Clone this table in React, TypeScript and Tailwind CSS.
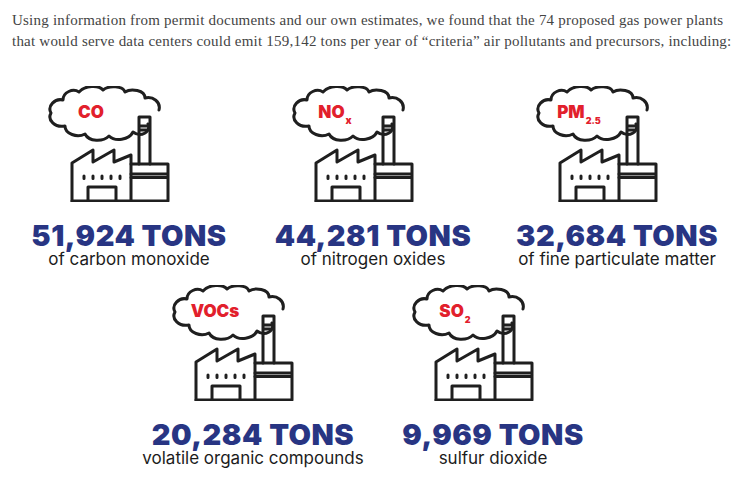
import type { ReactNode } from "react";

type Stat = {
  label: ReactNode;
  amount: string;
  caption: string;
};

const topRow: Stat[] = [
  { label: <>CO</>, amount: "51,924 TONS", caption: "of carbon monoxide" },
  {
    label: (
      <>
        NO<sub className="bottom-[-6px] ml-[1px] text-[10px]">x</sub>
      </>
    ),
    amount: "44,281 TONS",
    caption: "of nitrogen oxides",
  },
  {
    label: (
      <>
        PM<sub className="bottom-[-6px] ml-[1px] text-[9px]">2.5</sub>
      </>
    ),
    amount: "32,684 TONS",
    caption: "of fine particulate matter",
  },
];

const bottomRow: Stat[] = [
  { label: <>VOCs</>, amount: "20,284 TONS", caption: "volatile organic compounds" },
  {
    label: (
      <>
        SO<sub className="bottom-[-6px] ml-[1px] text-[9px]">2</sub>
      </>
    ),
    amount: "9,969 TONS",
    caption: "sulfur dioxide",
  },
];

function FactoryIcon() {
  return (
    <svg
      viewBox="0 0 124 116"
      className="h-[116px] w-[124px]"
      fill="none"
      stroke="#1f1f1f"
      strokeWidth="3"
      strokeLinejoin="round"
      strokeLinecap="round"
    >
      {/* cloud */}
      <path d="M101 38 C104 46 94 52 86 46 C82 54 68 56 62 50 C56 56 42 56 38 48 C30 52 18 48 18 40 C8 42 0 34 4 27 C0 20 8 12 16 14 C16 6 26 2 32 6 C38 -1 52 -1 56 4 C62 -1 76 0 78 6 C84 2 98 4 98 12 C106 10 114 16 112 24" />
      {/* chimney */}
      <path d="M92 78 V31 H103 V78 M92 40 H103 M92 44 H103" />
      {/* main hall with saw roof */}
      <path d="M25 115 V77 L46 64 V76 L67 64 V76 L84 69 V115" />
      {/* annex */}
      <path d="M84 78 H121 V115 H25 M84 88 H121 M84 91.5 H121" />
      {/* door */}
      <path d="M41 115 V101 H69 V115" />
      {/* windows */}
      <path
        d="M37 90 V92.5 M46 90 V92.5 M55 90 V92.5 M64 90 V92.5 M73 90 V92.5"
        strokeWidth="3"
        strokeLinecap="round"
      />
    </svg>
  );
}

function StatBlock({ stat, width }: { stat: Stat; width: string }) {
  return (
    <div className={`flex flex-col items-center ${width}`}>
      <div className="relative mr-[40px] h-[116px] w-[124px]">
        <FactoryIcon />
        <div className="absolute left-[6px] top-[10px] flex h-[32px] w-[76px] items-center justify-center font-['Inter',sans-serif] text-[17px] font-black leading-none text-[#e2202c]">
          <span>{stat.label}</span>
        </div>
      </div>
      <div className="mt-[22px] whitespace-nowrap font-['Inter',sans-serif] text-[29px] font-black leading-[24px] tracking-[0.5px] text-[#283583]">
        {stat.amount}
      </div>
      <div className="mt-[1px] whitespace-nowrap font-['Inter',sans-serif] text-[17px] leading-[20px] text-[#1c1c1c]">
        {stat.caption}
      </div>
    </div>
  );
}

export default function App() {
  return (
    <div className="h-[479px] w-[746px] overflow-hidden bg-white">
      <p className="whitespace-nowrap px-3 pt-[10px] font-['Liberation_Serif',serif] text-[15px] leading-[21px] tracking-[0.22px] text-[#444]">
        Using information from permit documents and our own estimates, we found that the 74
        proposed gas power plants
        <br />
        that would serve data centers could emit 159,142 tons per year of “criteria” air
        pollutants and precursors, including:
      </p>

      <div className="mt-[34px] flex justify-center">
        {topRow.map((stat) => (
          <StatBlock key={stat.amount} stat={stat} width="w-[244px]" />
        ))}
      </div>

      <div className="mt-[16px] flex justify-center">
        {bottomRow.map((stat) => (
          <StatBlock key={stat.amount} stat={stat} width="w-[240px]" />
        ))}
      </div>
    </div>
  );
}
